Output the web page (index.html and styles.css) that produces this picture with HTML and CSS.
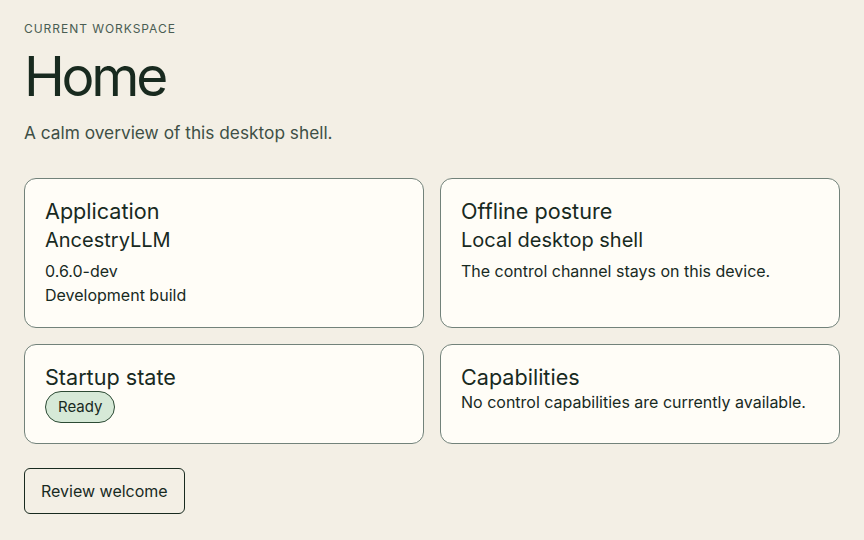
FILE: index.html
```html
<!DOCTYPE html>
<html lang="en">
<head>
    <meta charset="UTF-8">
    <meta name="viewport" content="width=device-width, initial-scale=1.0">
    <title>Home</title>
    <link rel="stylesheet" href="styles.css">
</head>
<body>

<main class="page">
    <header class="page-head">
        <p class="eyebrow">Current workspace</p>
        <h1>Home</h1>
        <p class="lead">A calm overview of this desktop shell.</p>
    </header>

    <section class="cards">
        <div class="card">
            <h2>Application</h2>
            <p class="card-main">AncestryLLM</p>
            <p class="card-line">0.6.0-dev</p>
            <p class="card-line">Development build</p>
        </div>
        <div class="card">
            <h2>Offline posture</h2>
            <p class="card-main">Local desktop shell</p>
            <p class="card-line">The control channel stays on this device.</p>
        </div>
        <div class="card">
            <h2>Startup state</h2>
            <span class="badge">Ready</span>
        </div>
        <div class="card">
            <h2>Capabilities</h2>
            <p class="card-note">No control capabilities are currently available.</p>
        </div>
    </section>

    <button class="btn" type="button">Review welcome</button>
</main>

</body>
</html>
```

FILE: styles.css
```css
* {
    box-sizing: border-box;
}
body {
    margin: 0;
    font-family: Inter, "Noto Sans", sans-serif;
    background-color: #f3efe5;
    color: #182a1f;
}
.page {
    padding: 20px 24px 24px;
}
.eyebrow {
    margin: 0;
    font-size: 12px;
    line-height: 18px;
    letter-spacing: 0.08em;
    text-transform: uppercase;
    color: #4a5d53;
}
h1 {
    margin: 7px 0 0;
    font-size: 55px;
    font-weight: 400;
    line-height: 1.15;
    letter-spacing: -0.06em;
}
.lead {
    margin: 12px 0 0;
    font-size: 17.3px;
    line-height: 26px;
    color: #3e4f46;
}
.cards {
    display: grid;
    grid-template-columns: 1fr 1fr;
    gap: 16px;
    margin-top: 32px;
}
.card {
    background-color: #fffdf7;
    border: 1px solid #72827a;
    border-radius: 12px;
    padding: 21px 20px 20px;
}
.card h2 {
    margin: 0;
    font-size: 21.6px;
    font-weight: 400;
    line-height: 1.1;
}
.card-main {
    margin: 2px 0 0;
    font-size: 20px;
    line-height: 28px;
}
.card-line {
    margin: 5px 0 0;
    font-size: 16px;
    line-height: 24px;
}
.card-line + .card-line {
    margin-top: 0;
}
.card-note {
    margin: 0;
    font-size: 16px;
    line-height: 24px;
}
.badge {
    display: inline-block;
    margin-top: 1px;
    padding: 6px 12px;
    font-size: 15px;
    line-height: 18px;
    background-color: #d6e9d7;
    border: 1px solid #2c4a34;
    border-radius: 999px;
}
.btn {
    margin-top: 24px;
    padding: 12px 16px;
    font-family: inherit;
    font-size: 16px;
    line-height: 20px;
    color: #182a1f;
    background-color: transparent;
    border: 1px solid #182a1f;
    border-radius: 6px;
    cursor: pointer;
}
```
